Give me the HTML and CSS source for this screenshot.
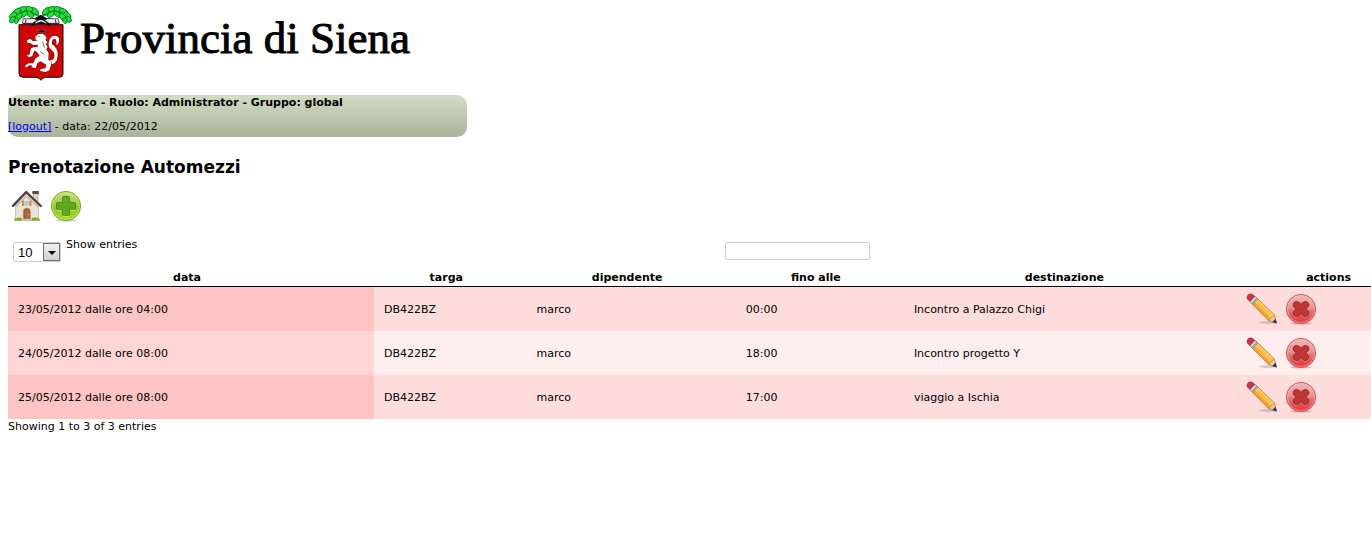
FILE: index.html
```html
<!DOCTYPE html>
<html lang="it">
<head>
    <meta charset="utf-8" />
    <title>Prenotazione Automezzi</title>
    <link rel="stylesheet" href="styles.css">
</head>
<body>
    <!-- icon definitions -->
    <svg class="defs" width="0" height="0" aria-hidden="true">
        <defs>
            <linearGradient id="gPencil" x1="0" y1="1" x2="1" y2="0">
                <stop offset="0.35" stop-color="#f28c28" />
                <stop offset="0.5" stop-color="#fdb540" />
                <stop offset="0.65" stop-color="#ffe070" />
            </linearGradient>
            <linearGradient id="gRed" x1="0" y1="0" x2="0" y2="1">
                <stop offset="0" stop-color="#f3b0b0" />
                <stop offset="0.5" stop-color="#e08080" />
                <stop offset="0.75" stop-color="#dc5555" />
                <stop offset="1" stop-color="#f02c2c" />
            </linearGradient>
            <linearGradient id="gGreen" x1="0" y1="0" x2="0" y2="1">
                <stop offset="0" stop-color="#c0dc62" />
                <stop offset="0.5" stop-color="#8fc42c" />
                <stop offset="1" stop-color="#a4dc1c" />
            </linearGradient>
        </defs>
        <symbol id="pencil" viewBox="0 0 32 32">
            <ellipse cx="22" cy="29.5" rx="9" ry="1.4" fill="#000" opacity="0.16" />
            <path d="M4 8.5L8.8 3L28.5 22L30.5 30L23 27.8Z" fill="#e8c9a0" stroke="#8d6b45" stroke-width="0.6" />
            <path d="M5.2 10.3L10.3 4.5L28.5 22.2Q26 22.6 25.6 24.8Q23.4 25 23 27.8Z" fill="url(#gPencil)" stroke="#c48330" stroke-width="0.6" />
            <path d="M8.3 7.5L25 24" stroke="#fff0a0" stroke-width="0.7" opacity="0.7" />
            <path d="M3.6 8.5L8.6 3.2L11.6 6L6.5 11.5Z" fill="#a9acab" stroke="#777" stroke-width="0.5" />
            <path d="M4.8 9.5L9.6 4.4" stroke="#f5f5f5" stroke-width="1" />
            <path d="M1 5.7Q0.6 2.2 3.2 1Q5.9 0.1 8.5 3.1L3.7 8.5Z" fill="#c93543" stroke="#a42732" stroke-width="0.5" />
            <path d="M30.8 30.5L26.4 29L29.5 25.8Z" fill="#333" />
        </symbol>
        <symbol id="delete" viewBox="0 0 32 32">
            <ellipse cx="16" cy="30.3" rx="11" ry="1.3" fill="#000" opacity="0.2" />
            <circle cx="16" cy="16" r="14.6" fill="url(#gRed)" stroke="#c95a5a" stroke-width="1" />
            <circle cx="16" cy="16" r="13.5" fill="none" stroke="#fac4c4" stroke-width="0.8" opacity="0.7" />
            <path d="M2.8 16A13.2 13.2 0 0 1 29.2 16Q16 18 2.8 16Z" fill="#fff" opacity="0.12" />
            <path d="M11.6 12.2L20.4 20.6M20.4 12.2L11.6 20.6" stroke="#f09a9a" stroke-width="7.4" stroke-linecap="round" />
            <path d="M11.6 11.8L20.4 20.2M20.4 11.8L11.6 20.2" stroke="#9f2a2a" stroke-width="7.4" stroke-linecap="round" />
            <path d="M11.6 11.8L20.4 20.2M20.4 11.8L11.6 20.2" stroke="#bf3636" stroke-width="5.6" stroke-linecap="round" />
        </symbol>
        <symbol id="add" viewBox="0 0 32 32">
            <ellipse cx="16" cy="30.3" rx="11" ry="1.3" fill="#000" opacity="0.2" />
            <circle cx="16" cy="16" r="14.6" fill="url(#gGreen)" stroke="#78a52b" stroke-width="1" />
            <circle cx="16" cy="16" r="13.5" fill="none" stroke="#dff0a0" stroke-width="0.8" opacity="0.7" />
            <path d="M2.8 16A13.2 13.2 0 0 1 29.2 16Q16 18 2.8 16Z" fill="#fff" opacity="0.12" />
            <path d="M12.5 8Q12.5 6.5 14 6.5H18Q19.5 6.5 19.5 8V12.5H24Q25.5 12.5 25.5 14V18Q25.5 19.5 24 19.5H19.5V24Q19.5 25.5 18 25.5H14Q12.5 25.5 12.5 24V19.5H8Q6.5 19.5 6.5 18V14Q6.5 12.5 8 12.5H12.5Z" fill="#62a822" stroke="#4a8c18" stroke-width="1" />
            <path d="M7 20.3H12M13 26.3H19M20 20.3H25" stroke="#cfee70" stroke-width="0.8" />
        </symbol>
        <symbol id="home" viewBox="0 0 32 32">
            <path d="M22.5 3H27V14H22.5Z" fill="#ddd0c0" stroke="#8a7a70" stroke-width="0.5" />
            <path d="M21.3 1H27.9V4H21.3Z" fill="#5a4a48" />
            <path d="M4.5 14L15.5 3.5L27.5 15V29.5H4.5Z" fill="#ece2d5" stroke="#b5a99c" stroke-width="0.6" />
            <path d="M5 15.5L15.5 5L27 16V18L15.5 7.3L5 17.5Z" fill="#a49282" opacity="0.5" />
            <path d="M2 15.8L15.2 2L29.8 16" fill="none" stroke="#4d403f" stroke-width="2.4" stroke-linejoin="round" stroke-linecap="round" />
            <path d="M13.2 10.5H18.3V16H13.2Z" fill="#a9c6dd" stroke="#eee" stroke-width="0.7" />
            <path d="M11 10.8H13.2V16H11ZM18.3 10.8H20.5V16H18.3Z" fill="#d98a48" />
            <path d="M11.7 29.5V21Q12 17.5 15.8 17.5Q19.7 17.5 20 21V29.5Z" fill="#b26a3e" stroke="#f1e9dd" stroke-width="0.8" />
            <path d="M13.5 28V21.5Q14 19 15.8 19Q17.7 19 18.2 21.5V28" fill="none" stroke="#8a5230" stroke-width="0.7" />
            <circle cx="17.7" cy="24.5" r="0.6" fill="#ffe29a" />
            <path d="M3.5 30Q3 28 5.5 28.5L7.5 27.7L10.5 28.2V30.5H4ZM21 30.5V28.3L24 27.7L26.5 28.2Q29 28 28.5 30.5Z" fill="#7cb820" stroke="#609a18" stroke-width="0.5" />
            <path d="M11 29.8H21V31H11Z" fill="#b9b0a8" />
        </symbol>
    </svg>

    <div class="logo">
        <svg class="stemma" viewBox="24 18 192 228" role="img" aria-label="Stemma">
            <!-- branches -->
            <g fill="#22dc3c" stroke="#0a5c18" stroke-width="2">
                <path d="M116 42Q104 22 80 25Q48 22 38 42L58 50Q84 38 116 48Z" />
                <path d="M128 42Q140 22 166 25Q194 20 204 40L188 50Q160 38 128 48Z" />
                <ellipse cx="104" cy="33" rx="13" ry="8" transform="rotate(32 104 33)" />
                <ellipse cx="86" cy="27" rx="13" ry="8" transform="rotate(14 86 27)" />
                <ellipse cx="67" cy="28" rx="13" ry="8" transform="rotate(-16 67 28)" />
                <ellipse cx="51" cy="35" rx="13" ry="8" transform="rotate(-28 51 35)" />
                <ellipse cx="39" cy="47" rx="13" ry="8" transform="rotate(-42 39 47)" />
                <ellipse cx="90" cy="43" rx="13" ry="7" transform="rotate(34 90 43)" />
                <ellipse cx="71" cy="43" rx="13" ry="7" transform="rotate(-35 71 43)" />
                <ellipse cx="56" cy="51" rx="14" ry="8" transform="rotate(-55 56 51)" />
                <ellipse cx="37" cy="59" rx="11" ry="7" transform="rotate(-50 37 59)" />
                <ellipse cx="49" cy="62" rx="9" ry="6" transform="rotate(-70 49 62)" />
                <ellipse cx="139" cy="33" rx="14" ry="8" transform="rotate(-42 139 33)" />
                <ellipse cx="156" cy="27" rx="13" ry="8" transform="rotate(-14 156 27)" />
                <ellipse cx="175" cy="28" rx="13" ry="8" transform="rotate(16 175 28)" />
                <ellipse cx="191" cy="35" rx="13" ry="8" transform="rotate(28 191 35)" />
                <ellipse cx="202" cy="46" rx="13" ry="8" transform="rotate(42 202 46)" />
                <ellipse cx="153" cy="43" rx="13" ry="7" transform="rotate(-34 153 43)" />
                <ellipse cx="173" cy="43" rx="13" ry="7" transform="rotate(35 173 43)" />
                <ellipse cx="188" cy="51" rx="14" ry="8" transform="rotate(55 188 51)" />
                <ellipse cx="206" cy="58" rx="10" ry="7" transform="rotate(50 206 58)" />
                <ellipse cx="195" cy="62" rx="9" ry="6" transform="rotate(70 195 62)" />
            </g>
            <!-- shield -->
            <path d="M57 74H189V222Q189 232 178 232H137Q127 233 123 241Q119 233 108 232H69Q57 232 57 220Z" fill="#cf0404" stroke="#111" stroke-width="3" />
            <!-- ribbon -->
            <path d="M68 73L72 58L105 54L122 44L140 54L172 58L178 73Z" fill="#111" />
            <path d="M70 56H102L112 60L97 70H67ZM174 56H143L133 60L147 70H178Z" fill="#eee" stroke="#222" stroke-width="2" />
            <path d="M78 58L76 69M166 58L168 69" stroke="#333" stroke-width="3" />
            <path d="M93 80Q95 68 118 63L128 63Q150 68 153 80L138 73L123 67L108 73Z" fill="#111" />
            <path d="M104 71Q108 63 122 60Q136 63 141 71L123 64Z" fill="#fff" />
            <path d="M115 98L112 89L119 93L125 86L131 93L138 89L135 98Z" fill="#111" stroke="#e79a8c" stroke-width="1" />
            <!-- lion -->
            <g fill="#fff" stroke="#5e0d0d" stroke-width="3" stroke-linejoin="round" paint-order="stroke">
                <path d="M136 178Q160 187 163 170Q165 157 154 149Q141 139 148 120Q155 105 169 108Q180 112 177 126L170 137L169 124Q169 115 162 117Q154 121 156 132Q176 146 173 167Q172 193 148 194L134 187Z" />
                <path d="M106 110L115 102L128 101L136 107L140 115L136 119L143 127L137 132L143 141L139 148L146 160L145 179L154 186L153 195L148 211L137 216L119 213L123 207L136 205L139 194L121 184L112 190L107 205L94 202L98 197L88 196L78 203L75 197L85 190L100 190L107 174L119 168L110 155L103 152L97 168L87 172L79 166L88 164L93 145L104 140L112 142L114 134L100 135L91 129L83 130L80 121L91 116L98 123L113 122L107 119Z" />
            </g>
            <path d="M114 109L119 110M128 125L133 143M121 155L133 164" stroke="#751212" stroke-width="2" />
        </svg>
        <span class="ente">Provincia di Siena</span>
    </div>

    <div class="utente">
        <p><b>Utente: marco - Ruolo: Administrator - Gruppo: global</b></p>
        <p><a href="#">[logout]</a> - data: 22/05/2012</p>
    </div>

    <h2>Prenotazione Automezzi</h2>

    <div class="icons">
        <a href="#" aria-label="Home"><svg class="icon"><use href="#home" /></svg></a>
        <a href="#" aria-label="Nuovo"><svg class="icon"><use href="#add" /></svg></a>
    </div>

    <div class="clip">
        <div class="wrapper">
            <div class="filters">
                <div class="length">
                    <div class="select_box">
                        <select id="len">
                            <option>10</option>
                            <option>25</option>
                            <option>50</option>
                            <option>100</option>
                        </select>
                        <span class="arrow"></span>
                    </div>
                    <label for="len">Show entries</label>
                </div>
                <div class="search">
                    <input type="text" aria-label="Search">
                </div>
            </div>

            <table>
                <colgroup>
                    <col class="c_data">
                    <col class="c_targa">
                    <col class="c_dip">
                    <col class="c_fino">
                    <col class="c_dest">
                    <col>
                </colgroup>
                <thead>
                    <tr>
                        <th>data</th>
                        <th>targa</th>
                        <th>dipendente</th>
                        <th>fino alle</th>
                        <th>destinazione</th>
                        <th>actions</th>
                    </tr>
                </thead>
                <tbody>
                    <tr>
                        <td>23/05/2012 dalle ore 04:00</td>
                        <td>DB422BZ</td>
                        <td>marco</td>
                        <td>00:00</td>
                        <td>Incontro a Palazzo Chigi</td>
                        <td>
                            <div class="icons">
                                <a href="#" aria-label="Modifica"><svg class="icon"><use href="#pencil" /></svg></a>
                                <a href="#" aria-label="Elimina"><svg class="icon"><use href="#delete" /></svg></a>
                            </div>
                        </td>
                    </tr>
                    <tr>
                        <td>24/05/2012 dalle ore 08:00</td>
                        <td>DB422BZ</td>
                        <td>marco</td>
                        <td>18:00</td>
                        <td>Incontro progetto Y</td>
                        <td>
                            <div class="icons">
                                <a href="#" aria-label="Modifica"><svg class="icon"><use href="#pencil" /></svg></a>
                                <a href="#" aria-label="Elimina"><svg class="icon"><use href="#delete" /></svg></a>
                            </div>
                        </td>
                    </tr>
                    <tr>
                        <td>25/05/2012 dalle ore 08:00</td>
                        <td>DB422BZ</td>
                        <td>marco</td>
                        <td>17:00</td>
                        <td>viaggio a Ischia</td>
                        <td>
                            <div class="icons">
                                <a href="#" aria-label="Modifica"><svg class="icon"><use href="#pencil" /></svg></a>
                                <a href="#" aria-label="Elimina"><svg class="icon"><use href="#delete" /></svg></a>
                            </div>
                        </td>
                    </tr>
                </tbody>
            </table>
            <div class="info">Showing 1 to 3 of 3 entries</div>
        </div>
    </div>
</body>
</html>
```

FILE: styles.css
```css
body {
    margin:6px 0 8px 8px;
    font-family:Verdana, "DejaVu Sans", sans-serif;
    font-size:11px;
    line-height:14px;
    color:#000;
    background:#fff;
}
.defs {
    position:absolute;
}
.logo {
    display:flex;
    gap:8px;
    margin-bottom:13px;
}
.stemma {
    width:64px;
    height:76px;
}
.ente {
    font-family:"Liberation Serif", serif;
    font-size:45px;
    line-height:64px;
    -webkit-text-stroke:1px #000;
}
.utente {
    max-width:459px;
    padding:1px 0 3px;
    border-radius:10px;
    background:linear-gradient(#d2dec4, #a8b39a);
}
    .utente p {
        margin:0 0 10px;
    }
    .utente p:last-child {
        margin:0;
    }
    .utente a {
        color:#0000ee;
    }
h2 {
    margin:20px 0 10px;
    font-size:17px;
    line-height:20px;
}
.icons {
    display:flex;
    gap:1px;
}
    .icons a {
        padding:3px;
    }
.icon {
    display:block;
    width:32px;
    height:32px;
}
/* the table is a little wider than the window */
.clip {
    overflow:hidden;
}
.wrapper {
    width:104.5%;
}
.filters {
    display:grid;
    grid-template-columns:1fr 1fr;
    padding:13px 0 5px;
}
.length {
    display:flex;
    gap:5px;
    padding-left:5px;
}
.select_box {
    position:relative;
    margin-top:4px;
}
.select_box select {
    display:block;
    appearance:none;
    width:48px;
    height:20px;
    padding:0 0 0 4px;
    border:1px solid #ccc;
    border-radius:2px;
    background:#fff;
    color:#000;
    font-family:"Liberation Sans", Arial, sans-serif;
    font-size:13px;
}
.arrow {
    position:absolute;
    top:1px;
    right:1px;
    box-sizing:border-box;
    width:17px;
    height:18px;
    border:1px solid #707070;
    background:linear-gradient(#f2f2f2, #cfcfcf);
    pointer-events:none;
}
    .arrow:after {
        content:'';
        position:absolute;
        left:4px;
        top:7px;
        border:4px solid transparent;
        border-top-color:#000;
        border-bottom:none;
    }
.search {
    padding:4px 5px 0;
}
    .search input {
        display:block;
        box-sizing:border-box;
        width:145px;
        height:18px;
        padding:1px;
        border:1px solid #ccc;
        border-radius:2px;
    }
table {
    width:100%;
    table-layout:fixed;
    border-collapse:separate;
    border-spacing:0;
}
.c_data {
    width:25.7%;
}
.c_targa {
    width:10.7%;
}
.c_dip {
    width:14.7%;
}
.c_fino {
    width:11.8%;
}
.c_dest {
    width:23.1%;
}
th {
    padding:4px 18px 1px 10px;
    border-bottom:1px solid #000;
    text-align:center;
}
td {
    padding:5px 10px 3px;
    background:#ffdddd;
}
td:first-child {
    background:#ffc4c4;
}
td:last-child {
    padding:3px 10px;
}
tr:nth-child(even) td {
    background:#ffeeee;
}
tr:nth-child(even) td:first-child {
    background:#ffd5d5;
}
.info {
    padding-top:1px;
}
```
